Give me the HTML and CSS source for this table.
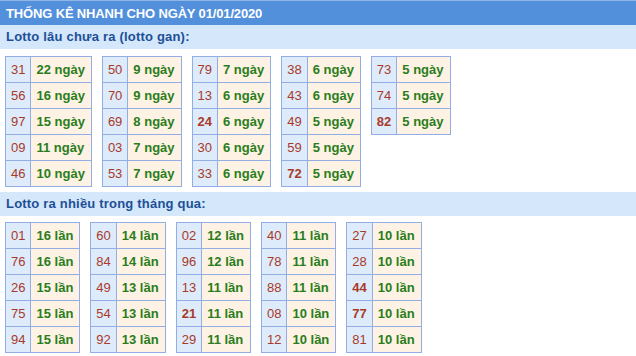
FILE: index.html
```html
<!DOCTYPE html>
<html lang="vi">
<head>
<meta charset="utf-8">
<link rel="stylesheet" href="styles.css">
</head>
<body>
<div class="page">
  <div class="header">THỐNG KÊ NHANH CHO NGÀY 01/01/2020</div>
  <div class="section">Lotto lâu chưa ra (lotto gan):</div>
  <div class="tables tables-top">
    <table class="stat"><tbody>
      <tr><td class="num">31</td><td class="val">22 ngày</td></tr>
      <tr><td class="num">56</td><td class="val">16 ngày</td></tr>
      <tr><td class="num">97</td><td class="val">15 ngày</td></tr>
      <tr><td class="num">09</td><td class="val">11 ngày</td></tr>
      <tr><td class="num">46</td><td class="val">10 ngày</td></tr>
    </tbody></table>
    <table class="stat"><tbody>
      <tr><td class="num">50</td><td class="val">9 ngày</td></tr>
      <tr><td class="num">70</td><td class="val">9 ngày</td></tr>
      <tr><td class="num">69</td><td class="val">8 ngày</td></tr>
      <tr><td class="num">03</td><td class="val">7 ngày</td></tr>
      <tr><td class="num">53</td><td class="val">7 ngày</td></tr>
    </tbody></table>
    <table class="stat"><tbody>
      <tr><td class="num">79</td><td class="val">7 ngày</td></tr>
      <tr><td class="num">13</td><td class="val">6 ngày</td></tr>
      <tr><td class="num b">24</td><td class="val">6 ngày</td></tr>
      <tr><td class="num">30</td><td class="val">6 ngày</td></tr>
      <tr><td class="num">33</td><td class="val">6 ngày</td></tr>
    </tbody></table>
    <table class="stat"><tbody>
      <tr><td class="num">38</td><td class="val">6 ngày</td></tr>
      <tr><td class="num">43</td><td class="val">6 ngày</td></tr>
      <tr><td class="num">49</td><td class="val">5 ngày</td></tr>
      <tr><td class="num">59</td><td class="val">5 ngày</td></tr>
      <tr><td class="num b">72</td><td class="val">5 ngày</td></tr>
    </tbody></table>
    <table class="stat"><tbody>
      <tr><td class="num">73</td><td class="val">5 ngày</td></tr>
      <tr><td class="num">74</td><td class="val">5 ngày</td></tr>
      <tr><td class="num b">82</td><td class="val">5 ngày</td></tr>
    </tbody></table>
  </div>
  <div class="section">Lotto ra nhiều trong tháng qua:</div>
  <div class="tables tables-bottom">
    <table class="stat"><tbody>
      <tr><td class="num">01</td><td class="val">16 lần</td></tr>
      <tr><td class="num">76</td><td class="val">16 lần</td></tr>
      <tr><td class="num">26</td><td class="val">15 lần</td></tr>
      <tr><td class="num">75</td><td class="val">15 lần</td></tr>
      <tr><td class="num">94</td><td class="val">15 lần</td></tr>
    </tbody></table>
    <table class="stat"><tbody>
      <tr><td class="num">60</td><td class="val">14 lần</td></tr>
      <tr><td class="num">84</td><td class="val">14 lần</td></tr>
      <tr><td class="num">49</td><td class="val">13 lần</td></tr>
      <tr><td class="num">54</td><td class="val">13 lần</td></tr>
      <tr><td class="num">92</td><td class="val">13 lần</td></tr>
    </tbody></table>
    <table class="stat"><tbody>
      <tr><td class="num">02</td><td class="val">12 lần</td></tr>
      <tr><td class="num">96</td><td class="val">12 lần</td></tr>
      <tr><td class="num">13</td><td class="val">11 lần</td></tr>
      <tr><td class="num b">21</td><td class="val">11 lần</td></tr>
      <tr><td class="num">29</td><td class="val">11 lần</td></tr>
    </tbody></table>
    <table class="stat"><tbody>
      <tr><td class="num">40</td><td class="val">11 lần</td></tr>
      <tr><td class="num">78</td><td class="val">11 lần</td></tr>
      <tr><td class="num">88</td><td class="val">11 lần</td></tr>
      <tr><td class="num">08</td><td class="val">10 lần</td></tr>
      <tr><td class="num">12</td><td class="val">10 lần</td></tr>
    </tbody></table>
    <table class="stat"><tbody>
      <tr><td class="num">27</td><td class="val">10 lần</td></tr>
      <tr><td class="num">28</td><td class="val">10 lần</td></tr>
      <tr><td class="num b">44</td><td class="val">10 lần</td></tr>
      <tr><td class="num b">77</td><td class="val">10 lần</td></tr>
      <tr><td class="num">81</td><td class="val">10 lần</td></tr>
    </tbody></table>
  </div>
</div>
</body>
</html>
```

FILE: styles.css
```css
html, body {
  margin: 0;
  padding: 0;
  background: #ffffff;
}

.page {
  width: 636px;
  font-family: "Liberation Sans", Arial, sans-serif;
  font-size: 13px;
}

.header {
  height: 24px;
  line-height: 25px;
  border-top: 1px solid #8fb6e6;
  background: #5290dc;
  color: #ffffff;
  font-weight: bold;
  font-size: 13px;
  padding-left: 6px;
  letter-spacing: -0.15px;
}

.section {
  height: 24px;
  line-height: 24px;
  background: #d4e7fb;
  color: #1d4f97;
  font-weight: bold;
  font-size: 13px;
  padding-left: 6px;
  letter-spacing: 0.2px;
}

.tables {
  display: flex;
  align-items: flex-start;
  gap: 10px;
  padding: 0 5px;
}

.tables-top {
  padding-top: 7px;
  padding-bottom: 5px;
}

.tables-bottom {
  padding-top: 6px;
}

.stat {
  border-collapse: collapse;
}

.stat td {
  height: 25px;
  border: 1px solid #93aee4;
  white-space: nowrap;
  font-size: 13px;
}

.stat .num {
  background: #deebfa;
  color: #a83a2a;
  text-align: center;
  padding: 0 5px;
}

.stat .num.b {
  font-weight: bold;
}

.stat .val {
  background: #fdf2e3;
  color: #2a7d1c;
  font-weight: bold;
  padding: 0 6px 0 5px;
}
```
